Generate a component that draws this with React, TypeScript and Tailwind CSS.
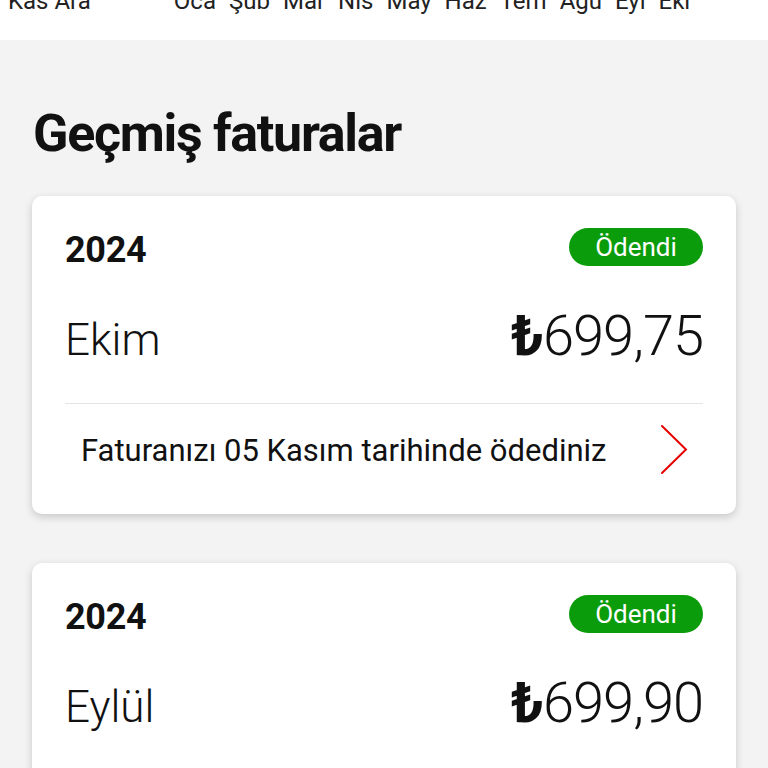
import React from "react";

const font = { fontFamily: "Roboto, 'Noto Sans', 'Liberation Sans', sans-serif" };

function Chevron() {
  return (
    <svg width="28" height="50" viewBox="0 0 28 50" fill="none">
      <path d="M2 1 L26 24.5 L2 48" stroke="#e60000" strokeWidth="2" strokeLinecap="round" strokeLinejoin="miter" />
    </svg>
  );
}

function Card({ month, amount, note }: { month: string; amount: string; note?: string }) {
  return (
    <div className="mx-[32px] rounded-[10px] bg-white px-[33px] pt-[32px] pb-[18px] shadow-[0_3px_8px_rgba(0,0,0,0.18)]">
      <div className="flex h-[38px] items-center justify-between">
        <span className="pt-[6px] text-[36px] leading-none font-bold text-[#111] tracking-[-0.3px]">2024</span>
        <span className="flex h-[38px] w-[134px] items-center justify-center rounded-full bg-[#0b9c0b] text-[26px] leading-none text-white">
          Ödendi
        </span>
      </div>
      <div className="mt-[40px] flex h-[60px] items-baseline justify-between">
        <span className="text-[44px] leading-[60px] font-light text-[#111]">{month}</span>
        <span className="text-[56px] leading-[60px] font-light text-[#111] tracking-[-1px]">
          <span className="font-bold">₺</span>699,{amount}
        </span>
      </div>
      {note && (
        <>
          <div className="mt-[37px] h-px bg-[#e4e4e4]" />
          <div className="flex h-[92px] items-center justify-between pl-[16px] pr-[15px]">
            <span className="text-[31px] leading-none text-[#111]">{note}</span>
            <Chevron />
          </div>
        </>
      )}
    </div>
  );
}

export default function App() {
  return (
    <div className="h-[768px] w-[768px] overflow-hidden bg-[#f3f3f3]" style={font}>
      <div className="h-[40px] overflow-hidden bg-white">
        <div className="mt-[-11px] flex h-[24px] text-[24px] leading-[24px] text-[#222] whitespace-nowrap">
          <span className="ml-[8px]">Kas Ara</span>
          <span className="ml-[83px] flex gap-[13px]">
            <span>Oca</span>
            <span>Şub</span>
            <span>Mar</span>
            <span>Nis</span>
            <span>May</span>
            <span>Haz</span>
            <span>Tem</span>
            <span>Ağu</span>
            <span>Eyl</span>
            <span>Eki</span>
          </span>
        </div>
      </div>
      <h1 className="mt-[64px] ml-[33px] text-[52px] leading-[60px] font-bold text-[#111] tracking-[-1.3px]">
        Geçmiş faturalar
      </h1>
      <div className="mt-[32px] flex flex-col gap-[49px]">
        <Card month="Ekim" amount="75" note="Faturanızı 05 Kasım tarihinde ödediniz" />
        <Card month="Eylül" amount="90" note="Faturanızı 05 Ekim tarihinde ödediniz" />
      </div>
    </div>
  );
}
